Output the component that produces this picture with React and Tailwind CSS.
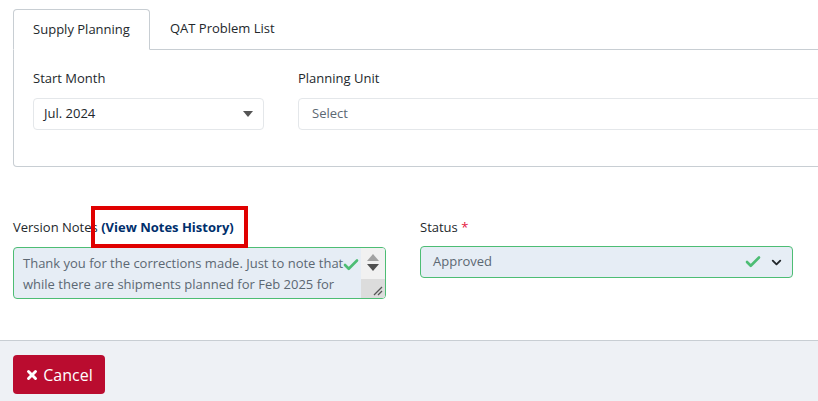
import { Check, ChevronDown, X } from 'lucide-react';

const font = { fontFamily: '"Open Sans", "Noto Sans", sans-serif' };

function CaretDown() {
  return (
    <svg width="10" height="6" viewBox="0 0 10 6" className="shrink-0">
      <path d="M0 0h10L5 6z" fill="#555" />
    </svg>
  );
}

function FakeScrollbar() {
  return (
    <div className="w-[24px] shrink-0 flex flex-col bg-[#f1f1f1]">
      <div className="flex flex-col items-center pt-[6px] gap-[3px]">
        <svg width="12" height="7" viewBox="0 0 12 7"><path d="M0 7L6 0l6 7z" fill="#a3a3a3" /></svg>
        <svg width="12" height="7" viewBox="0 0 12 7"><path d="M0 0h12L6 7z" fill="#505050" /></svg>
      </div>
      <div className="flex-1 mt-[8px] bg-[#dcdcdc] flex items-end justify-end pr-[2px] pb-[2px]">
        <svg width="12" height="12" viewBox="0 0 12 12">
          <path d="M11 3L3 11M11 7L7 11" stroke="#555" strokeWidth="1.3" />
        </svg>
      </div>
    </div>
  );
}

export default function App() {
  return (
    <div className="w-[818px] h-[401px] overflow-hidden bg-white flex flex-col text-[13px] text-[#23282c]" style={font}>
      <div className="pl-[13px] pt-[9px]">
        {/* Tabs */}
        <div className="flex border-b border-[#c8ced3] w-[830px]">
          <div className="h-[41px] w-[137px] -mb-px flex items-center justify-center border border-[#c8ced3] border-b-white bg-white rounded-t-[4px]">
            Supply Planning
          </div>
          <div className="h-[40px] px-[20px] flex items-center">QAT Problem List</div>
        </div>

        {/* Tab content */}
        <div className="w-[830px] h-[117px] border border-t-0 border-[#c8ced3] rounded-bl-[4px] px-[19px] pt-[18px]">
          <div className="flex gap-[34px]">
            <div className="w-[231px]">
              <div className="leading-[21px] mb-[9px]">Start Month</div>
              <div className="h-[32px] border border-[#e4e7ea] rounded-[4px] flex items-center justify-between px-[10px] text-[#23282c]">
                <span>Jul. 2024</span>
                <CaretDown />
              </div>
            </div>
            <div className="flex-1">
              <div className="leading-[21px] mb-[9px]">Planning Unit</div>
              <div className="h-[32px] border border-[#e4e7ea] rounded-l-[4px] flex items-center px-[13px] text-[#5c6873]">
                Select
              </div>
            </div>
          </div>
        </div>
      </div>

      {/* Notes + status */}
      <div className="flex gap-[34px] px-[13px] pt-[50px]">
        <div className="w-[373px] relative">
          <div className="leading-[21px] mb-[9px]">
            Version Notes <span className="font-bold text-[#002f6c]">(View Notes History)</span>
          </div>
          <div className="absolute left-[78px] top-[-11px] w-[157px] h-[42px] border-[4px] border-[#e00000]" />
          <div className="h-[52px] border border-[#4dbd74] rounded-[4px] bg-[#e6edf5] flex overflow-hidden">
            <div className="flex-1 pl-[9px] pt-[5px] pr-[4px] relative text-[#5c6873] leading-[21px] overflow-hidden">
              <div className="w-[330px]">
                Thank you for the corrections made. Just to note that while there are shipments planned for Feb 2025 for
              </div>
              <Check className="absolute right-[1px] top-[8px] text-[#4dbd74]" size={18} strokeWidth={3.5} />
            </div>
            <FakeScrollbar />
          </div>
        </div>
        <div className="w-[373px]">
          <div className="leading-[21px] mb-[8px]">
            Status <span className="text-[#e4143c]">*</span>
          </div>
          <div className="h-[32px] border border-[#4dbd74] rounded-[4px] bg-[#e6edf5] flex items-center pl-[12px] pr-[8px] text-[#5c6873]">
            <span className="flex-1">Approved</span>
            <Check className="text-[#4dbd74] mr-[7px]" size={18} strokeWidth={3.5} />
            <ChevronDown className="text-[#23282c]" size={15} strokeWidth={3} />
          </div>
        </div>
      </div>

      {/* Footer */}
      <div className="mt-auto h-[61px] border-t border-[#c8ced3] bg-[#eef1f5] px-[13px] pt-[14px]">
        <button className="h-[39px] w-[92px] rounded-[4px] bg-[#ba0c2f] text-white text-[16px] flex items-center justify-center gap-[4px]">
          <X size={14} strokeWidth={5} />
          Cancel
        </button>
      </div>
    </div>
  );
}
